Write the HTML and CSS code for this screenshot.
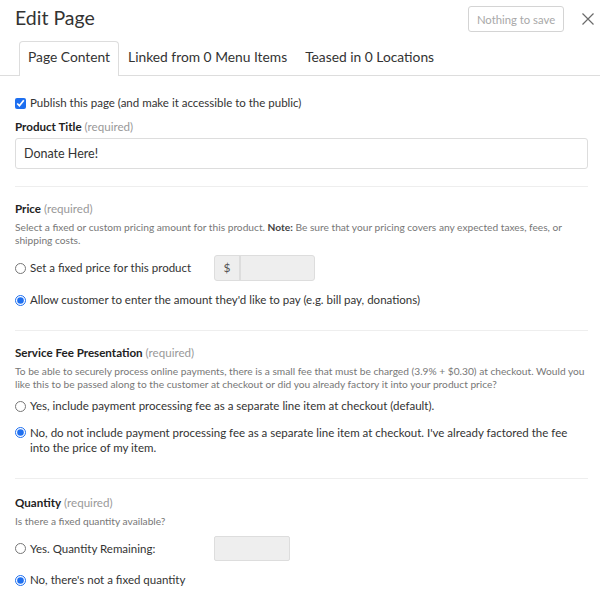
FILE: index.html
```html
<!DOCTYPE html>
<html lang="en">
<head>
<meta charset="utf-8">
<title>Edit Page</title>
<link rel="stylesheet" href="styles.css">
</head>
<body>
<div class="modal">
  <header class="head">
    <h1 class="title">Edit Page</h1>
    <div class="actions">
      <button class="save" type="button" disabled>Nothing to save</button>
      <button class="close" type="button" aria-label="Close">
        <svg width="12" height="12" viewBox="0 0 12 12"><path d="M0.5 0.5 L11.5 11.5 M11.5 0.5 L0.5 11.5" stroke="#6b6b6b" stroke-width="1.2" fill="none"/></svg>
      </button>
    </div>
  </header>
  <nav class="tabs">
    <a class="tab active">Page Content</a>
    <a class="tab">Linked from 0 Menu Items</a>
    <a class="tab">Teased in 0 Locations</a>
  </nav>
  <form class="body">
    <label class="check-row"><input type="checkbox" class="box" checked><span>Publish this page (and make it accessible to the public)</span></label>

    <div class="label l-title"><b>Product Title</b> <span class="req">(required)</span></div>
    <input class="text" type="text" value="Donate Here!">

    <hr class="sep">

    <div class="label"><b>Price</b> <span class="req">(required)</span></div>
    <p class="desc">Select a fixed or custom pricing amount for this product. <b>Note:</b> Be sure that your pricing covers any expected taxes, fees, or shipping costs.</p>
    <div class="opt opt-field first">
      <input type="radio" name="price" class="radio">
      <span class="opt-text">Set a fixed price for this product</span>
      <div class="group"><span class="addon">$</span><span class="group-input"></span></div>
    </div>
    <label class="opt">
      <input type="radio" name="price" class="radio" checked>
      <span>Allow customer to enter the amount they'd like to pay (e.g. bill pay, donations)</span>
    </label>

    <hr class="sep">

    <div class="label"><b>Service Fee Presentation</b> <span class="req">(required)</span></div>
    <p class="desc">To be able to securely process online payments, there is a small fee that must be charged (3.9% + $0.30) at checkout. Would you like this to be passed along to the customer at checkout or did you already factory it into your product price?</p>
    <label class="opt first-s">
      <input type="radio" name="fee" class="radio">
      <span>Yes, include payment processing fee as a separate line item at checkout (default).</span>
    </label>
    <label class="opt multi">
      <input type="radio" name="fee" class="radio" checked>
      <span>No, do not include payment processing fee as a separate line item at checkout. I've already factored the fee into the price of my item.</span>
    </label>

    <hr class="sep sep-3">

    <div class="label l-qty"><b>Quantity</b> <span class="req">(required)</span></div>
    <p class="desc one">Is there a fixed quantity available?</p>
    <div class="opt opt-field first">
      <input type="radio" name="qty" class="radio">
      <span class="opt-text">Yes. Quantity Remaining:</span>
      <span class="qty-input"></span>
    </div>
    <label class="opt last">
      <input type="radio" name="qty" class="radio" checked>
      <span>No, there's not a fixed quantity</span>
    </label>
  </form>
</div>
</body>
</html>
```
FILE: styles.css
```css
* { box-sizing: border-box; }
html, body { margin: 0; padding: 0; background: #fff; }
body {
  font-family: Lato, "Open Sans", sans-serif;
  color: #333;
  font-size: 11.5px;
}
.modal { width: 600px; }

.head {
  display: flex;
  justify-content: space-between;
  align-items: flex-start;
  height: 41px;
  padding: 6px 6px 0 15px;
}
.title {
  margin: 0;
  font-size: 19.5px;
  font-weight: 400;
  line-height: 24px;
  color: #333;
}
.actions { display: flex; align-items: center; }
.save {
  height: 26px;
  width: 96px;
  padding: 0;
  border: 1px solid #d4d4d4;
  border-radius: 3px;
  background: #fff;
  color: #a8a8a8;
  font-family: inherit;
  font-size: 11.3px;
}
.close {
  width: 12px;
  height: 26px;
  margin-left: 18px;
  padding: 0;
  border: 0;
  background: transparent;
  display: flex;
  align-items: center;
  justify-content: center;
}

.tabs {
  display: flex;
  height: 35px;
  padding-left: 19px;
  border-bottom: 1px solid #ddd;
}
.tab {
  display: block;
  height: 35px;
  padding: 5px 8px 9px;
  border: 1px solid transparent;
  border-bottom: 0;
  border-radius: 4px 4px 0 0;
  font-size: 13.8px;
  line-height: 20px;
  color: #333;
  margin-bottom: -1px;
}
.tab.active {
  border-color: #ddd;
  background: #fff;
}

.body { padding: 18px 12px 20px 15px; }

.check-row {
  display: flex;
  align-items: center;
  height: 18px;
  line-height: 18px;
}
.box, .radio {
  width: 11px;
  height: 11px;
  margin: 0 4px 0 0;
  accent-color: #1e6ff0;
  flex: none;
}
.label {
  line-height: 18px;
  margin-top: 13px;
  font-size: 11.6px;
}
.label b { font-weight: 700; color: #222; }
.req { color: #999; }
.l-title { margin-top: 6px; }
.l-qty { margin-top: 15px; }

.text {
  display: block;
  width: 100%;
  height: 31px;
  margin-top: 2px;
  padding: 0 8px;
  border: 1px solid #ddd;
  border-radius: 3px;
  font-family: inherit;
  font-size: 12.5px;
  color: #333;
}

.sep {
  margin: 17px 0 0;
  border: 0;
  border-top: 1px solid #eee;
  height: 0;
}

.desc {
  margin: 3px 0 0;
  font-size: 10.2px;
  line-height: 13px;
  color: #777;
}
.desc b { color: #444; }
.desc.one { margin-top: 3px; }

.opt {
  display: flex;
  align-items: center;
  margin-top: 10px;
  line-height: 18px;
}
.opt.first { margin-top: 8px; }
.opt.first-s { margin-top: 6px; }
.opt.last { margin-top: 10px; }
.opt.multi { align-items: flex-start; line-height: 15px; }
.opt.multi .radio { margin-top: 2px; }
.opt-text { width: 184px; }

.group {
  display: flex;
  width: 101px;
  height: 26px;
  border: 1px solid #ddd;
  border-radius: 3px;
  overflow: hidden;
  background: #eee;
}
.addon {
  width: 26px;
  border-right: 2px solid #ddd;
  display: flex;
  align-items: center;
  justify-content: center;
  color: #555;
  font-size: 12px;
}
.group-input { flex: 1; }
.qty-input {
  width: 76px;
  height: 25px;
  border: 1px solid #ddd;
  border-radius: 2px;
  background: #eee;
}
.opt + .sep { margin-top: 21px; }
.opt + .sep.sep-3 { margin-top: 23px; }
```
